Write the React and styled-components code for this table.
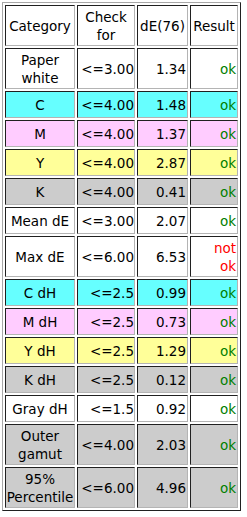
import React from 'react';
import styled, { createGlobalStyle } from 'styled-components';

const GlobalStyle = createGlobalStyle`
    body {
        margin: 0;
        background: #ffffff;
        font-family: "DejaVu Sans", Verdana, sans-serif;
    }
`

const Page = styled.div`
    padding: 2px 0 0 2px;
`

const ResultTable = styled.table`
    border-collapse: separate;
    border-spacing: 2px;
    table-layout: fixed;
    width: 239px;
    border: 1px solid;
    border-color: #a8a8a8 #202020 #202020 #a8a8a8;
    font-size: 13.5px;
    line-height: 18px;
    color: #000000;
`

const bgFor = {
    white: '#ffffff',
    cyan: '#66ffff',
    magenta: '#ffccff',
    yellow: '#ffff99',
    gray: '#cccccc',
};

const Row = styled.tr`
    background: ${(p) => bgFor[p.$tone] || '#ffffff'};
`

const Cell = styled.td`
    box-sizing: border-box;
    height: 27px;
    padding: 2px ${(p) => (p.$tight ? '0' : '1px')} 1px;
    border: 1px solid;
    border-color: #202020 #b4b4b4 #b4b4b4 #202020;
    text-align: ${(p) => p.$align || 'right'};
    vertical-align: middle;
    white-space: nowrap;
    color: ${(p) => (p.$status === 'ok' ? '#008000' : p.$status === 'bad' ? '#ff0000' : 'inherit')};
`

const HeadCell = styled(Cell).attrs({ as: 'th' })`
    font-weight: normal;
    text-align: center;
    white-space: normal;
`

const rows = [
    { name: ['Paper', 'white'], check: '<=3.00', value: '1.34', ok: true, tone: 'white' },
    { name: ['C'], check: '<=4.00', value: '1.48', ok: true, tone: 'cyan' },
    { name: ['M'], check: '<=4.00', value: '1.37', ok: true, tone: 'magenta' },
    { name: ['Y'], check: '<=4.00', value: '2.87', ok: true, tone: 'yellow' },
    { name: ['K'], check: '<=4.00', value: '0.41', ok: true, tone: 'gray' },
    { name: ['Mean dE'], check: '<=3.00', value: '2.07', ok: true, tone: 'white' },
    { name: ['Max dE'], check: '<=6.00', value: '6.53', ok: false, tone: 'white' },
    { name: ['C dH'], check: '<=2.5', value: '0.99', ok: true, tone: 'cyan' },
    { name: ['M dH'], check: '<=2.5', value: '0.73', ok: true, tone: 'magenta' },
    { name: ['Y dH'], check: '<=2.5', value: '1.29', ok: true, tone: 'yellow' },
    { name: ['K dH'], check: '<=2.5', value: '0.12', ok: true, tone: 'gray' },
    { name: ['Gray dH'], check: '<=1.5', value: '0.92', ok: true, tone: 'white' },
    { name: ['Outer', 'gamut'], check: '<=4.00', value: '2.03', ok: true, tone: 'gray' },
    { name: ['95%', 'Percentile'], check: '<=6.00', value: '4.96', ok: true, tone: 'gray' },
];

const lines = (parts) =>
    parts.map((p, i) => (
        <React.Fragment key={i}>
            {i > 0 && <br />}
            {p}
        </React.Fragment>
    ));

const App = () => {
    return (
        <>
            <GlobalStyle />
            <Page>
                <ResultTable>
                    <colgroup>
                        <col style={{ width: 70 }} />
                        <col style={{ width: 58 }} />
                        <col style={{ width: 51 }} />
                        <col style={{ width: 48 }} />
                    </colgroup>
                    <thead>
                        <Row $tone="white">
                            <HeadCell>Category</HeadCell>
                            <HeadCell>Check<br />for</HeadCell>
                            <HeadCell>dE(76)</HeadCell>
                            <HeadCell>Result</HeadCell>
                        </Row>
                    </thead>
                    <tbody>
                        {rows.map((item) => (
                            <Row key={item.name.join(' ')} $tone={item.tone}>
                                <Cell $align="center" $tight>{lines(item.name)}</Cell>
                                <Cell $tight>{item.check}</Cell>
                                <Cell>{item.value}</Cell>
                                {item.ok
                                    ? <Cell $status="ok">ok</Cell>
                                    : <Cell $status="bad">not<br />ok</Cell>}
                            </Row>
                        ))}
                    </tbody>
                </ResultTable>
            </Page>
        </>
    )
}

export default App;
